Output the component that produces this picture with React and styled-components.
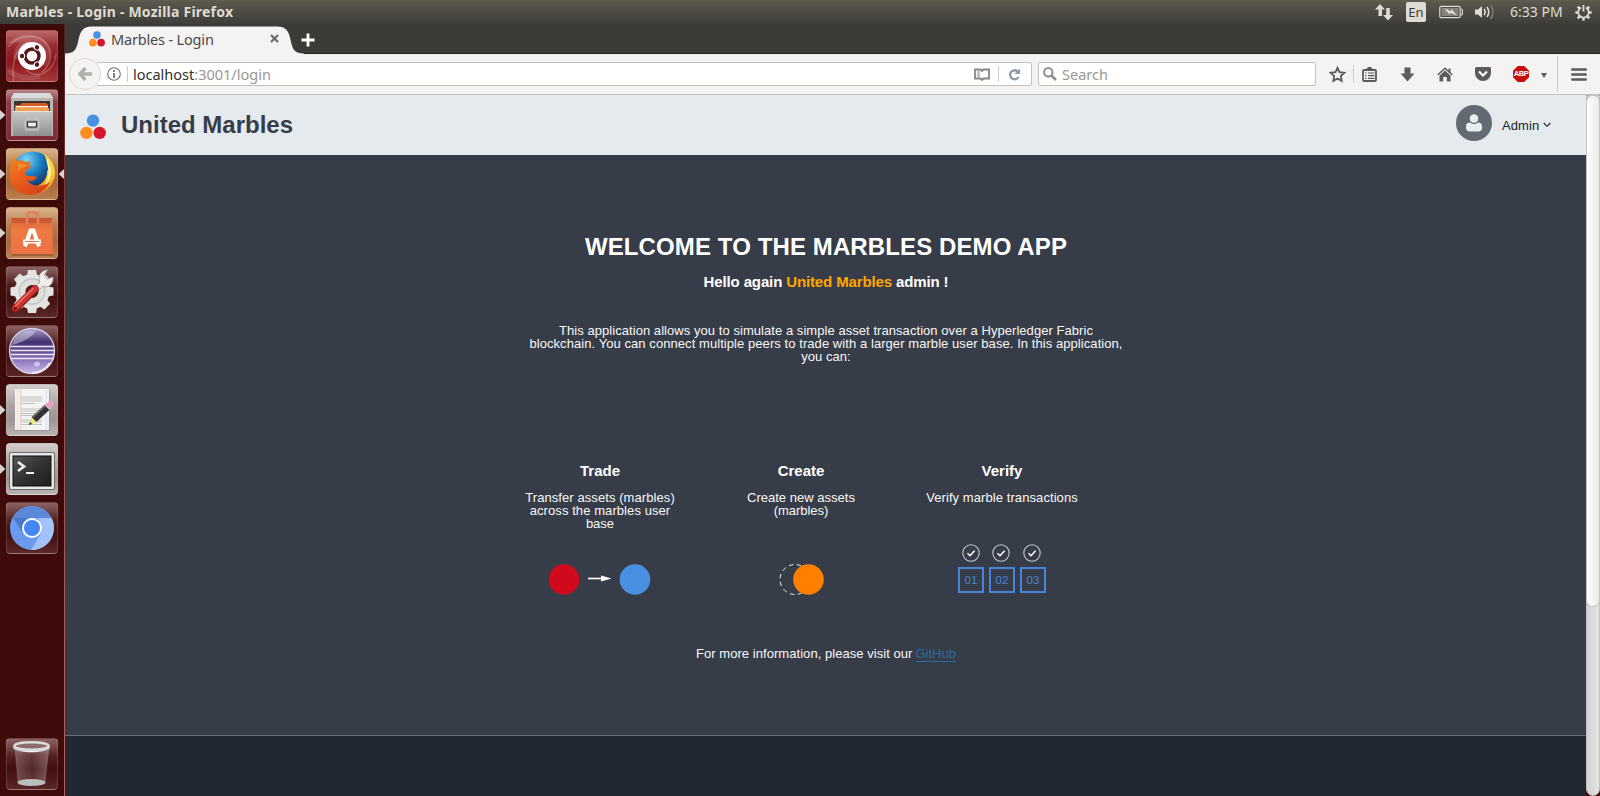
import React from "react";
import styled, { createGlobalStyle } from "styled-components";

const Global = createGlobalStyle`
  * { box-sizing: border-box; }
  html, body { margin: 0; padding: 0; overflow: hidden; }
  svg { display: block; flex: none; }
`;

const ui = `"Noto Sans", "Open Sans", sans-serif`;
const helv = `"Liberation Sans", Arial, sans-serif`;

const Desktop = styled.div`
  width: 1600px;
  height: 796px;
  display: flex;
  flex-direction: column;
  overflow: hidden;
  background: #3f0a0a;
  font-family: ${ui};
`;

const Spaced = styled.span`
  display: block;
  white-space: nowrap;
  letter-spacing: ${(p) => p.$ls || 0}px;
`;

/* ---------- top panel ---------- */
const Panel = styled.header`
  height: 24px;
  flex: none;
  display: flex;
  align-items: center;
  padding: 0 8px 0 6px;
  background: linear-gradient(#626052, #5a574d 2px, #3e3d38);
  color: #dfdbd2;
  font-size: 14px;
  line-height: 24px;
`;
const WindowTitle = styled(Spaced)`
  font-weight: 700;
  flex: 1;
`;
const Indicators = styled.div`
  display: flex;
  align-items: center;
  height: 24px;
`;
const Lang = styled.div`
  width: 20px;
  height: 20px;
  margin: 0 13px 0 13px;
  border-radius: 2px;
  background: #dfdbd2;
  color: #3c3b37;
  font-size: 13px;
  line-height: 20px;
  text-align: center;
`;
const Volume = styled.svg`
  margin-left: 12px;
`;
const Clock = styled(Spaced)`
  width: 53px;
  margin: 0 12px 0 15px;
`;

const Below = styled.div`
  flex: 1;
  display: flex;
  min-height: 0;
`;

/* ---------- launcher ---------- */
const Launcher = styled.nav`
  width: 65px;
  flex: none;
  display: flex;
  flex-direction: column;
  gap: 7px;
  padding: 6px 0;
  border-right: 1px solid;
  border-image: linear-gradient(#5a2022, #8f4442 30%, #b55d55 80%) 1;
  background: #3f0a0a;
`;
const Slot = styled.div`
  display: flex;
  align-items: center;
  height: 52px;
  margin-top: ${(p) => (p.$last ? "auto" : 0)};
`;
const Mark = styled.i`
  width: 6px;
  height: 10px;
  flex: none;
  background: ${(p) => (p.$on ? "#d8d2d2" : "transparent")};
  clip-path: ${(p) => (p.$right ? "polygon(100% 0, 100% 100%, 10% 50%)" : "polygon(0 0, 90% 50%, 0 100%)")};
`;
const Tile = styled.div`
  width: 52px;
  height: 52px;
  flex: none;
  border-radius: 4px;
  overflow: hidden;
  border: 1px solid rgba(255, 255, 255, 0.14);
  background: ${(p) => p.$bg};
`;
const ArtBox = styled.svg`
  margin: -1px;
`;

/* ---------- browser ---------- */
const Browser = styled.section`
  flex: 1;
  min-width: 0;
  display: flex;
  flex-direction: column;
`;
const TabStrip = styled.div`
  height: 30px;
  flex: none;
  display: flex;
  background: #3c3b37;
  border-bottom: 1px solid #242320;
`;
const Tab = styled.div`
  width: 239px;
  height: 30px;
  display: grid;
  color: #4a4a48;
  font-size: 14.5px;
  > * { grid-area: 1 / 1; }
`;
const TabInner = styled.div`
  display: flex;
  align-items: center;
  padding: 1px 25px 2px 24px;
  > span { flex: 1; margin-left: 6px; line-height: 26px; }
`;
const NewTab = styled.svg`
  margin: 9px 0 0 -3px;
`;
const Toolbar = styled.div`
  height: 41px;
  flex: none;
  display: flex;
  align-items: center;
  padding: 0 0 0 4px;
  background: #f4f3f1;
  border-bottom: 1px solid #c4c1bc;
  color: #999894;
  font-size: 14.5px;
`;
const Back = styled.div`
  width: 32px;
  height: 32px;
  border-radius: 50%;
  border: 1px solid #dcd9d5;
  background: #f4f3f1;
  display: flex;
  align-items: center;
  justify-content: center;
  z-index: 1;
`;
const Field = styled.div`
  width: ${(p) => p.$w}px;
  height: 24px;
  margin-left: ${(p) => p.$ml}px;
  padding: 0 ${(p) => p.$pr || 0}px 0 ${(p) => p.$pl}px;
  display: flex;
  align-items: center;
  gap: ${(p) => p.$gap || 0}px;
  background: #fff;
  border: 1px solid #c4c1bc;
  border-radius: 2px;
  line-height: 22px;
`;
const Url = styled(Spaced)`
  flex: 1;
  margin-left: 5px;
  b { font-weight: 400; color: #33322f; }
`;
const Rule = styled.i`
  width: 1px;
  height: ${(p) => p.$h || 16}px;
  margin: 0 ${(p) => p.$mr || 0}px 0 ${(p) => p.$ml || 0}px;
  background: #cfccc8;
`;
const Tools = styled.div`
  flex: 1;
  display: flex;
  align-items: center;
  padding-left: 13px;
`;
const ToolSlot = styled.div`
  width: ${(p) => p.$w || 16}px;
  margin-left: ${(p) => p.$ml || 0}px;
`;
const StopSign = styled.div`
  width: 16px;
  height: 16px;
  background: #c60b0b;
  clip-path: polygon(30% 0, 70% 0, 100% 30%, 100% 70%, 70% 100%, 30% 100%, 0 70%, 0 30%);
  color: #fff;
  font: 700 7.5px/16px ${helv};
  letter-spacing: -0.5px;
  text-align: center;
`;

const View = styled.div`
  flex: 1;
  min-height: 0;
  display: flex;
`;
const Page = styled.div`
  flex: 1;
  display: flex;
  flex-direction: column;
  font-family: ${helv};
`;
const Track = styled.div`
  width: 14px;
  background: linear-gradient(90deg, #d2d2d2, #e4e4e4);
  border: 1px solid #c2bfba;
  border-radius: 0 0 7px 7px;
`;
const Thumb = styled.div`
  height: 510px;
  border-radius: 6px;
  background: linear-gradient(90deg, #fdfdfc, #ececea);
  box-shadow: 0 0 0 1px #c6c3be;
`;

const SiteHeader = styled.div`
  height: 60px;
  flex: none;
  display: flex;
  align-items: center;
  padding: 0 35px 0 15px;
  background: #e5eaee;
  color: #373d48;
`;
const LogoSpot = styled.div`
  padding-top: 4px;
`;
const Brand = styled(Spaced)`
  flex: 1;
  margin-left: 15px;
  font-size: 24px;
  font-weight: 700;
  line-height: 30px;
`;
const Avatar = styled.div`
  width: 36px;
  height: 36px;
  margin: -4px 10px 0 0;
  border-radius: 50%;
  background: #636a74;
  display: flex;
  align-items: center;
  justify-content: center;
`;
const User = styled(Spaced)`
  width: 41px;
  padding-top: 2px;
  font-size: 13px;
  line-height: 16px;
  color: #1e2329;
`;

const Main = styled.main`
  height: 581px;
  flex: none;
  display: flex;
  flex-direction: column;
  align-items: center;
  padding: 77px 0 0 1px;
  background: #373d48;
  border-bottom: 1px solid #656b78;
  color: #fff;
  text-align: center;
`;
const Heading = styled.h1`
  margin: 0;
  font-size: 24px;
  line-height: 30px;
`;
const Hello = styled.h2`
  margin: 10px 0 32px;
  font-size: 15px;
  line-height: 20px;
  em { font-style: normal; color: #ffa500; }
`;
const Text = styled.div`
  font-size: 13px;
  line-height: 13px;
  color: #f7f8f8;
`;
const Steps = styled.div`
  width: 653px;
  margin-top: 98px;
  display: grid;
  grid-template-columns: repeat(3, 201px);
`;
const Step = styled.div`
  display: flex;
  flex-direction: column;
  align-items: center;
  h3 { margin: 0 0 10px; font-size: 15px; line-height: 20px; }
  ${Text} { height: 39px; margin-bottom: 10px; }
`;
const Checks = styled.div`
  display: flex;
  gap: 5px;
  padding: 4px 0 0 0;
  height: 60px;
`;
const Check = styled.div`
  display: flex;
  flex-direction: column;
  gap: 5px;
  padding-left: 0;
  > svg { margin-left: ${(p) => p.$dx}px; }
`;
const Num = styled.div`
  width: 26px;
  height: 26px;
  border: 2px solid #4685da;
  color: #4a86d4;
  font-size: 11.5px;
  line-height: 23px;
`;
const More = styled(Text)`
  display: flex;
  margin-top: 46px;
  line-height: 16px;
`;
const Link = styled.a`
  margin-left: 3px;
  height: 16px;
  color: #2d6ca2;
  border-bottom: 1px solid #2d6ca2;
`;
const Footer = styled.footer`
  flex: 1;
  background: #222831;
`;

/* ---------- icons ---------- */
const Logo = ({ s }) => (
  <svg width={s} height={s} viewBox="0 0 26 26">
    <circle cx="13" cy="6.6" r="6.2" fill="#4a90e2" />
    <circle cx="6.4" cy="18.9" r="6.2" fill="#ff8b21" />
    <circle cx="19.7" cy="18.9" r="6.2" fill="#d6152b" />
  </svg>
);

const Art = ({ children }) => <ArtBox width="52" height="52" viewBox="0 0 52 52">{children}</ArtBox>;

const Dash = () => (
  <Art>
    <g fill="none" stroke="#fff" strokeOpacity=".22" strokeWidth="1.600">
      <path d="M2 17C12 4 34 2 42 16C48 27 42 38 36 42" />
      <path d="M8 52C5 34 9 18 22 12" />
      <path d="M20 40C32 50 48 42 50 24" />
      <path d="M2 40C12 48 22 50 34 46" strokeWidth="5" strokeOpacity=".12" />
    </g>
    <path d="M0 14C14 0 36 2 43 16C46 24 44 32 40 37L26 26L8 30C7 22 10 16 14 12Z" fill="#fff" opacity=".12" />
    <circle cx="26" cy="26" r="14" fill="#fff" />
    <circle cx="26" cy="26" r="7" fill="none" stroke="#55171a" strokeWidth="3.4" />
    {[60, 180, 300].map((a) => (
      <g key={a} transform={`rotate(${a} 26 26)`}>
        <circle cx="36" cy="26" r="3.2" fill="#fff" />
        <circle cx="36" cy="26" r="2.2" fill="#55171a" />
      </g>
    ))}
  </Art>
);
const Files = () => (
  <Art>
    <defs><linearGradient id="cab" x1="0" y1="0" x2="0" y2="1"><stop offset="0" stopColor="#c9c9c7" /><stop offset="1" stopColor="#8f8f8d" /></linearGradient></defs>
    <path d="M8 4H44L47 9V47H5V9Z" fill="#b7b7b5" />
    <path d="M8 4H44L47 9H5Z" fill="#d9d9d8" />
    <rect x="8" y="12" width="36" height="11" fill="#3b3330" />
    <path d="M9 16H14L16 14H40L42 16V23H9Z" fill="#d65b22" />
    <rect x="10" y="17" width="32" height="1.500" fill="#fff3da" />
    <rect x="9" y="19" width="34" height="4" fill="#f0a04e" />
    <rect x="7" y="22" width="39" height="25" fill="url(#cab)" />
    <path d="M7 22.5H46" stroke="#e3e3e2" />
    <rect x="19" y="30" width="14" height="11" rx="2" fill="#ababaa" stroke="#d0d0cf" />
    <rect x="21.5" y="33" width="9" height="5" fill="#eee" stroke="#333" strokeWidth="1.2" />
  </Art>
);
const Firefox = () => (
  <Art>
    <defs>
      <radialGradient id="ffb" cx=".35" cy=".2" r=".75"><stop offset="0" stopColor="#7fd6f6" /><stop offset=".45" stopColor="#1d84c4" /><stop offset="1" stopColor="#0c2a62" /></radialGradient>
      <linearGradient id="ffo" x1="0" y1="0" x2=".7" y2="1"><stop offset="0" stopColor="#f08a24" /><stop offset=".5" stopColor="#ea5d1c" /><stop offset="1" stopColor="#d2451b" /></linearGradient>
      <linearGradient id="ffy" x1="0" y1="0" x2="0" y2="1"><stop offset="0" stopColor="#fbe65a" /><stop offset=".6" stopColor="#f6c32c" /><stop offset="1" stopColor="#ef7a1e" /></linearGradient>
    </defs>
    <circle cx="26.500" cy="24" r="20.500" fill="url(#ffb)" />
    <path d="M38 6C47 12 51 22 48 31C45 41 36 46 28 46L30 38C38 36 42 28 41 22C43 23 43 25 43 25C43 17 41 13 38 6Z" fill="url(#ffy)" />
    <path d="M40 10C45 17 46 24 44 30C43 34 40 37 37 39C41 35 43 27 42 20Z" fill="#fff3a0" />
    <path d="M6 12L8 8L11 13C14 12 17 12 19 14L25 13.500C23 16 22 17 25 18L24 20C20 22 19 24 20 27C23 29 27 27 31 29C29 33 25 34 21 32C24 38 35 40 44 34C39 44 30 48 21 47C10 45 3 37 4 26C4 20 5 16 6 12Z" fill="url(#ffo)" />
    <path d="M12 16C16 14 20 16 22 18C18 19 14 20 12 24Z" fill="#f6a13a" opacity=".6" />
  </Art>
);
const Store = () => (
  <Art>
    <defs><linearGradient id="bag" x1="0" y1="0" x2="0" y2="1"><stop offset="0" stopColor="#d9603a" /><stop offset=".35" stopColor="#ee7a40" /><stop offset="1" stopColor="#ee7045" /></linearGradient></defs>
    <rect x="6" y="45" width="41" height="4" fill="#7a3d1a" opacity=".4" />
    <path d="M5 11H46L47 47H5Z" fill="url(#bag)" />
    <path d="M5 11H46L44 16H8Z" fill="#b84a2c" opacity=".45" />
    <path d="M21 17V9Q21 5.500 24 5.500H29Q32 5.500 32 9V17" fill="none" stroke="#e08060" strokeWidth="2.600" />
    <g fill="none" stroke="#fff" strokeWidth="4">
      <path d="M19 39.500L24.500 23.500H27.500L33 39.500" />
      <path d="M17 34.500H35" strokeWidth="4.200" />
    </g>
    <path d="M19 34.500H33" stroke="#f0713c" strokeWidth="1.100" />
  </Art>
);
const Settings = () => (
  <Art>
    <g fill="#e4e4e2">
      {[0, 45, 90, 135, 180, 225, 270, 315].map((a) => <path key={a} d="M22 4H30L31.500 12H20.500Z" transform={`rotate(${a} 26 25.500)`} />)}
      <circle cx="26" cy="25.500" r="17.500" />
    </g>
    <circle cx="26" cy="25.500" r="13.500" fill="#c4c4c2" />
    <circle cx="26" cy="25.500" r="12" fill="#dededc" />
    <circle cx="26" cy="25.500" r="6.500" fill="#4b1c1c" />
    <path d="M28 22L34 16C31 10 35 4 42 4L38 9L41 13L47 11C48 18 42 23 37 20L31 26Z" fill="#eee" stroke="#9a9a98" strokeWidth=".8" />
    <path d="M9.500 42.500L29 23" stroke="#8f1714" strokeWidth="7.500" strokeLinecap="round" />
    <path d="M9.500 42L29 22.500" stroke="#cf3532" strokeWidth="6" strokeLinecap="round" />
    <path d="M9.500 40L27 22.500" stroke="#ee7a74" strokeWidth="1.400" strokeLinecap="round" />
    <circle cx="9.500" cy="42.500" r="1.500" fill="#5e0e0c" />
  </Art>
);
const Eclipse = () => (
  <Art>
    <defs><linearGradient id="ecl" x1="0" y1="0" x2="0" y2="1"><stop offset="0" stopColor="#a79bc9" /><stop offset=".3" stopColor="#43306f" /><stop offset=".55" stopColor="#6c53a0" /><stop offset="1" stopColor="#cbb9ea" /></linearGradient></defs>
    <circle cx="26" cy="26" r="22.500" fill="url(#ecl)" stroke="#d8cfe8" strokeWidth="1.400" />
    <path d="M6 20C8 8 20 3 30 6C26 12 16 18 6 20Z" fill="#e7e2f3" opacity=".45" />
    <path d="M44 38A22 22 0 0 1 26 48" fill="none" stroke="#f1ebfb" strokeWidth="2" />
    <ellipse cx="31" cy="39" rx="3" ry="2.500" fill="#e2d6f6" opacity=".7" />
    {[21.500, 25.500, 29.500, 33.500].map((y) => <path key={y} d={`M5 ${y}H48`} stroke="#ece7f5" strokeWidth="1.400" />)}
  </Art>
);
const Editor = () => (
  <Art>
    <rect x="9" y="5" width="35" height="42" fill="#8a8785" opacity=".5" />
    <rect x="9" y="5" width="34" height="41" fill="#f3f3f2" />
    <path d="M14.500 5V46" stroke="#f3c9c4" /><path d="M11.500 5V46M40.500 5V46" stroke="#dcdfee" />
    {[13, 15, 17, 19.500, 25, 27, 29.500, 31.500, 36, 38, 40.500].map((y, i) => <path key={y} d={`M15 ${y}H${i % 4 === 3 ? 29 : 36}`} stroke="#bcbcbc" strokeWidth=".9" />)}
    <path d="M23 41L25.500 33L31 38Z" fill="#f5e27c" />
    <path d="M23 41L24 38L26 40Z" fill="#222" />
    <path d="M28 35.500L42 22.500" stroke="#323232" strokeWidth="7" />
    <path d="M27 33L40 21" stroke="#777" strokeWidth="1.300" />
    <path d="M41 23.500L43 21.500" stroke="#c9c9c9" strokeWidth="7" />
    <path d="M43 21.500L45 19.500" stroke="#e8a0c4" strokeWidth="6" strokeLinecap="round" />
  </Art>
);
const Terminal = () => (
  <Art>
    <defs><linearGradient id="trm" x1="0" y1="0" x2="1" y2="1"><stop offset="0" stopColor="#555" /><stop offset=".5" stopColor="#333" /><stop offset="1" stopColor="#1d1d1d" /></linearGradient></defs>
    <rect x="3.500" y="9.500" width="45" height="37" rx="1.500" fill="#e7e7e6" stroke="#6b6b69" />
    <rect x="7" y="13" width="38" height="30" fill="url(#trm)" stroke="#111" />
    <path d="M12 19L18 23.500L12 28" fill="none" stroke="#f0f0f0" strokeWidth="2.600" />
    <path d="M20 30H28" stroke="#f0f0f0" strokeWidth="2" />
  </Art>
);
const Chromium = () => (
  <Art>
    <circle cx="26" cy="26" r="22" fill="#6a9bf0" />
    <path d="M6.500 16A22 22 0 0 1 45.500 16H26L16 30Z" fill="#5b88d8" />
    <path d="M45.500 16A22 22 0 0 1 25 48L36 30L32 16Z" fill="#a3c2f8" />
    <path d="M7.500 15L17 31L22 17Z" fill="#4a78cc" />
    <circle cx="26" cy="26" r="10" fill="#fff" />
    <circle cx="26" cy="26" r="8" fill="#4486f4" />
  </Art>
);
const Trash = () => (
  <Art>
    <defs>
      <linearGradient id="tr" x1="0" y1="0" x2="1" y2="0"><stop offset="0" stopColor="#fff" stopOpacity=".25" /><stop offset=".5" stopColor="#fff" stopOpacity=".1" /><stop offset="1" stopColor="#fff" stopOpacity=".28" /></linearGradient>
      <linearGradient id="rim" x1="0" y1="0" x2="1" y2="0"><stop offset="0" stopColor="#a4a8a4" /><stop offset=".5" stopColor="#fff" /><stop offset="1" stopColor="#a4a8a4" /></linearGradient>
    </defs>
    <path d="M9 10L12 45H39L43 10Z" fill="url(#tr)" stroke="#fff" strokeOpacity=".12" />
    <ellipse cx="25.500" cy="44.500" rx="14" ry="3.500" fill="#b9bfba" />
    <path d="M7 8V10.500C12 15.500 39 15.500 44 10.500V8Z" fill="url(#rim)" />
    <ellipse cx="25.500" cy="8" rx="17" ry="3.700" fill="#8a6a6a" stroke="#d9dcd9" strokeWidth="2.500" />
  </Art>
);

const red = "linear-gradient(#b9696c, #9b2b30 30%, #8c1518 60%, #a5383c)";
const wine = "linear-gradient(#b98489, #8d3b43 25%, #7c2a33)";
const tan = "linear-gradient(#d9b48c, #b67b4b 35%, #a9683a 70%, #b98050)";
const dark = "linear-gradient(#8c6263, #53201f 35%, #410f0f 60%, #592726)";
const grey = "linear-gradient(#d3cdcb, #aaa4a2 40%, #9c9593 70%, #bab4b2)";
const apps = [
  [Dash, red], [Files, wine, true], [Firefox, tan, true, true], [Store, tan, true], [Settings, dark],
  [Eclipse, dark], [Editor, grey, true], [Terminal, grey, true], [Chromium, dark], [Trash, dark],
];

const StepBlock = ({ title, lines, children }) => (
  <Step>
    <h3>{title}</h3>
    <Text>{lines.map(([t, ls]) => <Spaced key={t} $ls={ls}>{t}</Spaced>)}</Text>
    {children}
  </Step>
);

const tool = "#5b5b5a";

export default function App() {
  return (
    <Desktop>
      <Global />
      <Panel>
        <WindowTitle $ls={0.22}>Marbles - Login - Mozilla Firefox</WindowTitle>
        <Indicators>
          <svg width="18" height="18" viewBox="0 0 18 18" fill="#dfdbd2">
            <path d="M5 1L10 6.500H7V13H3.500V6.500H0Z M13 17.500L8 12H11.200V5H14.800V12H18Z" />
          </svg>
          <Lang>En</Lang>
          <svg width="24" height="14" viewBox="0 0 24 14">
            <rect x=".8" y="1.300" width="20.400" height="11.400" rx="1.500" fill="none" stroke="#dfdbd2" strokeWidth="1.200" />
            <rect x="2.500" y="3" width="17" height="8" fill="#85827a" />
            <path d="M22 4Q23.500 4 23.500 6V8Q23.500 10 22 10" fill="none" stroke="#dfdbd2" strokeWidth="1.200" />
            <path d="M5 3L12 6.500L12 4L18 10.500L10.500 7.500L11 10Z" fill="#e8e5de" />
          </svg>
          <Volume width="20" height="18" viewBox="0 0 20 18" fill="none" stroke="#dfdbd2" strokeWidth="1.600">
            <path d="M0 6.500H3L7 3V15L3 11.500H0Z" fill="#dfdbd2" stroke="none" />
            <path d="M9 6Q11.300 9 9 12" /><path d="M12 4Q15.500 9 12 14" /><path d="M15.500 2Q20.500 9 15.500 16" stroke="#7c7970" />
          </Volume>
          <Clock $ls={0}>6:33 PM</Clock>
          <svg width="17" height="17" viewBox="0 0 17 17" fill="none" stroke="#dfdbd2" strokeWidth="1.800">
            <path d="M6 3.600A5.300 5.300 0 1 0 11 3.600" />
            <path d="M8.500 1V7.500" />
            {[45, 90, 135, 180, 225, 270, 315].map((a) => <path key={a} d="M8.500 .3V3" transform={`rotate(${a} 8.500 8.500)`} strokeWidth="2.400" />)}
          </svg>
        </Indicators>
      </Panel>
      <Below>
        <Launcher>
          {apps.map(([Icon, bg, left, right], i) => (
            <Slot key={i} $last={i === apps.length - 1}>
              <Mark $on={left} />
              <Tile $bg={bg}><Icon /></Tile>
              <Mark $right $on={right} />
            </Slot>
          ))}
        </Launcher>
        <Browser>
          <TabStrip>
            <Tab>
              <svg width="239" height="30" viewBox="0 0 239 30">
                <path d="M0 30V29.500C9 29.500 11 26 13 18C15 8 17 2.500 27 2.500H212C222 2.500 224 8 226 18C228 26 230 29.500 239 29.500V30Z" fill="#f4f3f1" />
              </svg>
              <TabInner>
                <Logo s={16} />
                <Spaced $ls={-0.17}>Marbles - Login</Spaced>
                <svg width="9" height="9" viewBox="0 0 9 9" stroke="#6b6a68" strokeWidth="2.200"><path d="M1 1L8 8M8 1L1 8" /></svg>
              </TabInner>
            </Tab>
            <NewTab width="14" height="14" viewBox="0 0 14 14" stroke="#fff" strokeWidth="2.800">
              <path d="M7 .5V13.500M.5 7H13.500" />
            </NewTab>
          </TabStrip>
          <Toolbar>
            <Back>
              <svg width="14" height="14" viewBox="0 0 14 14" fill="none" stroke="#b1afac" strokeWidth="3.400">
                <path d="M7.500 1L1.800 7L7.500 13M2 7H14" />
              </svg>
            </Back>
            <Field $w={936} $ml={-5} $pl={10} $pr={10}>
              <svg width="14" height="14" viewBox="0 0 14 14">
                <circle cx="7" cy="7" r="6.300" fill="none" stroke="#6e6e6c" strokeWidth="1.100" />
                <path d="M7 6V11M7 3V5" stroke="#6e6e6c" strokeWidth="1.700" />
              </svg>
              <Rule $ml={6} />
              <Url $ls={0}><b>localhost</b>:3001/login</Url>
              <svg width="16" height="13" viewBox="0 0 16 13">
                <path d="M1 1.500H6.500L8 3L9.500 1.500H15V10.500H9.500L8 12L6.500 10.500H1Z" fill="#fff" stroke="#858585" strokeWidth="1.800" />
                <path d="M3 4H6M3 6H6M3 8H6" stroke="#858585" />
              </svg>
              <Rule $ml={8} $mr={9} />
              <svg width="13" height="13" viewBox="0 0 13 13" fill="none" stroke="#8c9aa8" strokeWidth="2.300">
                <path d="M10.500 9A4.500 4.500 0 1 1 9.500 3.300" /><path d="M12 .5V6H6.500Z" fill="#8c9aa8" stroke="none" />
              </svg>
            </Field>
            <Field $w={278} $ml={6} $pl={4} $gap={5}>
              <svg width="14" height="14" viewBox="0 0 14 14" fill="none" stroke="#8f8f8d">
                <circle cx="5.300" cy="5.300" r="4.200" strokeWidth="2" /><path d="M8.500 8.500L13 13" strokeWidth="2.600" />
              </svg>
              <Spaced $ls={0}>Search</Spaced>
            </Field>
            <Tools>
              <svg width="17" height="17" viewBox="0 0 17 17" fill="none" stroke={tool} strokeWidth="1.800">
                <path d="M8.500 1.800L10.500 6.200L15.300 6.800L11.800 10L12.700 14.900L8.500 12.500L4.300 14.900L5.200 10L1.700 6.800L6.500 6.200Z" />
              </svg>
              <Rule $h={18} $ml={7} $mr={8} />
              <ToolSlot>
                <svg width="15" height="15" viewBox="0 0 15 15" fill="none" stroke={tool} strokeWidth="1.800">
                  <rect x="1" y="3" width="13" height="11" rx="1" /><path d="M4.500 3L7.500 0L10.500 3Z" fill={tool} />
                  <path d="M3 6H4.500M6 6H12.500M3 8.700H4.500M6 8.700H12.500M3 11.300H4.500M6 11.300H12.500" strokeWidth="1.200" />
                </svg>
              </ToolSlot>
              <ToolSlot $ml={22}>
                <svg width="15" height="15" viewBox="0 0 15 15" fill={tool}><path d="M4.500 .5H10.500V6.500H14.500L7.500 14.500L.5 6.500H4.500Z" /></svg>
              </ToolSlot>
              <ToolSlot $ml={21}>
                <svg width="16" height="15" viewBox="0 0 16 15" fill={tool}>
                  <path d="M8 3.500L13.500 8.700V14.500H9.800V10H6.200V14.500H2.500V8.700Z" />
                  <path d="M.7 8L8 1.200L15.300 8" fill="none" stroke={tool} strokeWidth="1.500" /><rect x="11.500" y="1.500" width="2" height="4" />
                </svg>
              </ToolSlot>
              <ToolSlot $ml={22}>
                <svg width="16" height="14" viewBox="0 0 16 14">
                  <path d="M1.500 0H14.500Q16 0 16 1.500V6A8 8 0 0 1 0 6V1.500Q0 0 1.500 0Z" fill={tool} />
                  <path d="M4 4.500L8 8.500L12 4.500" fill="none" stroke="#fff" strokeWidth="2.200" />
                </svg>
              </ToolSlot>
              <ToolSlot $ml={22}>
                <StopSign>ABP</StopSign>
              </ToolSlot>
              <ToolSlot $ml={12} $w={6}>
                <svg width="6" height="8" viewBox="0 0 6 8" fill={tool}><path d="M0 3H6L3 8Z" /></svg>
              </ToolSlot>
              <Rule $h={36} $ml={10} $mr={13} />
              <svg width="16" height="13" viewBox="0 0 16 13" stroke={tool} strokeWidth="2.600" strokeLinecap="round">
                <path d="M1.300 1.500H14.700M1.300 6.500H14.700M1.300 11.500H14.700" />
              </svg>
            </Tools>
          </Toolbar>
          <View>
            <Page>
              <SiteHeader>
                <LogoSpot><Logo s={26} /></LogoSpot>
                <Brand $ls={0}>United Marbles</Brand>
                <Avatar>
                  <svg width="16" height="18" viewBox="0 0 16 18" fill="#e9eef2">
                    <rect x="0" y="8.500" width="16" height="9" rx="4" /><circle cx="8" cy="4.800" r="5.200" fill="#636a74" /><circle cx="8" cy="4.500" r="4.300" />
                  </svg>
                </Avatar>
                <User $ls={0.1}>Admin</User>
                <svg width="8" height="6" viewBox="0 0 8 6" fill="none" stroke="#1e2329" strokeWidth="1.100"><path d="M.7 1L4 4.300L7.300 1" /></svg>
              </SiteHeader>
              <Main>
                <Heading><Spaced $ls={0.11}>WELCOME TO THE MARBLES DEMO APP</Spaced></Heading>
                <Hello><Spaced $ls={-0.13}>Hello again <em>United Marbles</em> admin !</Spaced></Hello>
                <Text>
                  <Spaced $ls={0.055}>This application allows you to simulate a simple asset transaction over a Hyperledger Fabric</Spaced>
                  <Spaced $ls={0.068}>blockchain. You can connect multiple peers to trade with a larger marble user base. In this application,</Spaced>
                  <Spaced $ls={0.05}>you can:</Spaced>
                </Text>
                <Steps>
                  <StepBlock title="Trade" lines={[["Transfer assets (marbles)", 0.08], ["across the marbles user", 0.08], ["base", 0]]}>
                    <svg width="104" height="60" viewBox="0 0 104 60">
                      <circle cx="16" cy="39.500" r="15.300" fill="#d0091c" />
                      <path d="M40 38.500H56" stroke="#fff" strokeWidth="1.600" /><path d="M53 35.500L63.500 38.500L53 41.500Z" fill="#fff" />
                      <circle cx="87" cy="39.500" r="15.300" fill="#4a90e2" />
                    </svg>
                  </StepBlock>
                  <StepBlock title="Create" lines={[["Create new assets", 0.02], ["(marbles)", -0.05]]}>
                    <svg width="46" height="60" viewBox="0 0 46 60">
                      <circle cx="17" cy="39.500" r="15" fill="none" stroke="#e6e8ea" strokeDasharray="4.500 3.500" />
                      <circle cx="30.500" cy="39.500" r="15.300" fill="#ff7f00" />
                    </svg>
                  </StepBlock>
                  <StepBlock title="Verify" lines={[["Verify marble transactions", 0.08]]}>
                    <Checks>
                      {[["01", 4], ["02", 2.5], ["03", 3]].map(([n, dx]) => (
                        <Check key={n} $dx={dx}>
                          <svg width="18" height="18" viewBox="0 0 18 18" fill="none">
                            <circle cx="9" cy="9" r="8.200" stroke="#c6cad0" strokeWidth="1.100" />
                            <path d="M5.500 9.200L8 11.700L12.600 6.800" stroke="#fff" strokeWidth="1.500" />
                          </svg>
                          <Num>{n}</Num>
                        </Check>
                      ))}
                    </Checks>
                  </StepBlock>
                </Steps>
                <More><Spaced $ls={0.05}>For more information, please visit our</Spaced><Link><Spaced $ls={0}>GitHub</Spaced></Link></More>
              </Main>
              <Footer />
            </Page>
            <Track><Thumb /></Track>
          </View>
        </Browser>
      </Below>
    </Desktop>
  );
}
